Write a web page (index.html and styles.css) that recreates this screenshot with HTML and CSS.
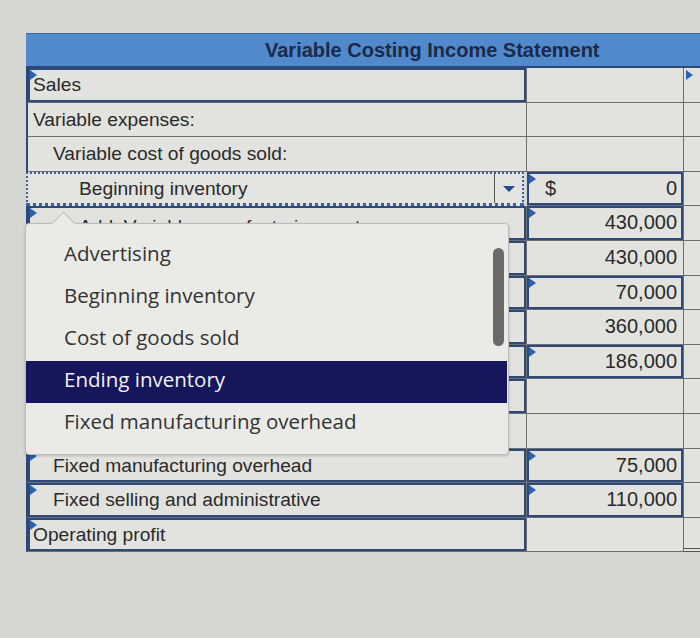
FILE: index.html
```html
<!DOCTYPE html>
<html>
<head>
<meta charset="utf-8">
<link rel="stylesheet" href="styles.css">
</head>
<body>
<div class="page">
  <div class="sheet">
    <div class="hdr">Variable Costing Income Statement</div>

    <div class="row">
      <div class="cell lab box flag">Sales</div>
      <div class="cell val"></div>
      <div class="cell ext flag"></div>
    </div>
    <div class="row">
      <div class="cell lab">Variable expenses:</div>
      <div class="cell val"></div>
      <div class="cell ext"></div>
    </div>
    <div class="row">
      <div class="cell lab i1">Variable cost of goods sold:</div>
      <div class="cell val"></div>
      <div class="cell ext"></div>
    </div>
    <div class="row">
      <div class="cell lab i2 focus"><span class="txt">Beginning inventory</span><span class="dd"><i class="tri"></i></span></div>
      <div class="cell val box flag dollar"><span>$</span><span>0</span></div>
      <div class="cell ext"></div>
    </div>
    <div class="row">
      <div class="cell lab i2 box flag low">Add: Variable manufacturing costs</div>
      <div class="cell val box flag">430,000</div>
      <div class="cell ext"></div>
    </div>
    <div class="row">
      <div class="cell lab i1 box"></div>
      <div class="cell val">430,000</div>
      <div class="cell ext"></div>
    </div>
    <div class="row">
      <div class="cell lab i2 box flag"></div>
      <div class="cell val box flag">70,000</div>
      <div class="cell ext"></div>
    </div>
    <div class="row">
      <div class="cell lab i1 box"></div>
      <div class="cell val">360,000</div>
      <div class="cell ext"></div>
    </div>
    <div class="row">
      <div class="cell lab box flag"></div>
      <div class="cell val box flag">186,000</div>
      <div class="cell ext"></div>
    </div>
    <div class="row">
      <div class="cell lab box"></div>
      <div class="cell val"></div>
      <div class="cell ext"></div>
    </div>
    <div class="row">
      <div class="cell lab"></div>
      <div class="cell val"></div>
      <div class="cell ext"></div>
    </div>
    <div class="row">
      <div class="cell lab i1 box flag">Fixed manufacturing overhead</div>
      <div class="cell val box flag">75,000</div>
      <div class="cell ext"></div>
    </div>
    <div class="row">
      <div class="cell lab i1 box flag">Fixed selling and administrative</div>
      <div class="cell val box flag">110,000</div>
      <div class="cell ext"></div>
    </div>
    <div class="row">
      <div class="cell lab box flag">Operating profit</div>
      <div class="cell val"></div>
      <div class="cell ext last"></div>
    </div>
  </div>

  <div class="menu">
    <div class="caret"></div>
    <div class="item">Advertising</div>
    <div class="item">Beginning inventory</div>
    <div class="item">Cost of goods sold</div>
    <div class="item sel">Ending inventory</div>
    <div class="item after">Fixed manufacturing overhead</div>
    <div class="thumb"></div>
  </div>
</div>
</body>
</html>
```

FILE: styles.css
```css
* { box-sizing: border-box; margin: 0; padding: 0; }
html, body { width: 700px; height: 638px; overflow: hidden; }
body {
  background: #d6d6d3;
  font-family: "Liberation Sans", Arial, sans-serif;
  color: #2a2a2a;
}
.page {
  position: relative;
  width: 700px;
  height: 638px;
  overflow: hidden;
  padding: 33px 0 0 26px;
}
.sheet { width: 674px; overflow: hidden; }
.hdr {
  width: 700px;
  height: 35px;
  background: #5189cd;
  border-top: 1px solid #3f6aa3;
  border-bottom: 2px solid #2e4773;
  font-weight: bold;
  font-size: 20px;
  color: #1c2a47;
  padding-left: 239px;
  line-height: 32px;
  white-space: nowrap;
}
.row {
  display: grid;
  grid-template-columns: 501px 157px 40px;
  height: 34.6px;
}
.cell {
  position: relative;
  background: #e2e2df;
  border-bottom: 1px solid #6e6e6e;
  border-right: 1px solid #6e6e6e;
  font-size: 19.2px;
  line-height: 33px;
  white-space: nowrap;
  overflow: hidden;
}
.lab {
  border-left: 2px solid #2f4777;
  padding-left: 5px;
}
.i1 { padding-left: 25px; }
.i2 { padding-left: 51px; }
.low { padding-top: 4px; }
.val {
  text-align: right;
  padding-right: 6px;
  font-size: 20px;
}
.dollar {
  display: flex;
  justify-content: space-between;
  padding-left: 18px;
}
.box { box-shadow: inset 0 0 0 2px #2e4a7a; }
.flag::before {
  content: "";
  position: absolute;
  left: 2px;
  top: 2px;
  border-left: 7px solid #2a62b4;
  border-top: 5px solid transparent;
  border-bottom: 5px solid transparent;
}
.ext { border-right: none; }
.last { border-bottom: 4px double #555; }

.focus {
  display: flex;
  border: 2px dotted #3a5e9f;
  border-bottom-width: 3px;
  line-height: 30px;
  margin-right: 3px;
  background: #e3e3e0;
}
.focus .txt { flex: 1; }
.dd {
  width: 28px;
  border-left: 1px solid #555;
  display: flex;
  align-items: center;
  justify-content: center;
}
.tri {
  width: 0; height: 0;
  border-top: 6px solid #234c8c;
  border-left: 6px solid transparent;
  border-right: 6px solid transparent;
}

.menu {
  position: absolute;
  left: 25px;
  top: 223px;
  width: 484px;
  height: 232px;
  background: #eaeae7;
  border: 1px solid #bdbdbb;
  border-radius: 4px;
  box-shadow: 0 1px 3px rgba(0,0,0,0.18);
  padding-top: 8px;
  font-family: "Open Sans", "DejaVu Sans", sans-serif;
  font-size: 20.5px;
  color: #333;
}
.caret {
  position: absolute;
  left: 29px;
  top: -9px;
  width: 17px;
  height: 17px;
  background: #eaeae7;
  border-left: 1px solid #bdbdbb;
  border-top: 1px solid #bdbdbb;
  transform: rotate(45deg);
}
.item {
  height: 42px;
  line-height: 42px;
  padding-left: 38px;
  margin-right: 1px;
}
.item.sel {
  background: #15165b;
  color: #f2f2f2;
  margin-top: 3px;
  line-height: 36px;
}
.item.after {
  height: 39px;
  line-height: 36px;
}
.thumb {
  position: absolute;
  left: 467px;
  top: 24px;
  width: 11px;
  height: 98px;
  border-radius: 6px;
  background: #6a6a6a;
}
```
